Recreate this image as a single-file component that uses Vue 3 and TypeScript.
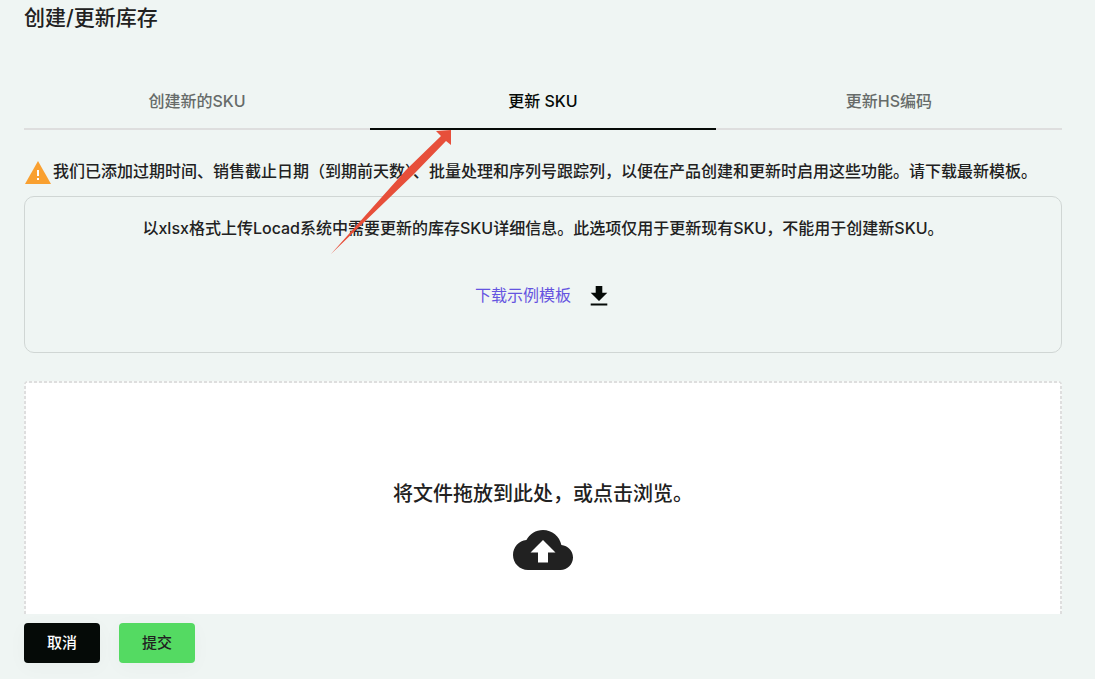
<script setup lang="ts">
import { ref } from 'vue'

interface Tab {
  id: string
  label: string
}

const tabs: Tab[] = [
  { id: 'create', label: '创建新的SKU' },
  { id: 'update', label: '更新 SKU' },
  { id: 'hs', label: '更新HS编码' },
]
const active = ref('update')
</script>

<template>
  <div class="page">
    <main class="content">
      <h1 class="title">创建/更新库存</h1>

      <div class="tabs" role="tablist">
        <button
          v-for="tab in tabs"
          :key="tab.id"
          type="button"
          role="tab"
          class="tab"
          :class="{ active: tab.id === active }"
          :aria-selected="tab.id === active"
          @click="active = tab.id"
        >
          {{ tab.label }}
        </button>
      </div>

      <p class="notice">
        <svg class="warning" viewBox="0 0 26 23" aria-hidden="true">
          <path d="M0 23L13 0L26 23z" fill="#f9a030" />
          <path d="M12 9h2v6h-2zM12 17h2v2h-2z" fill="#fff" />
        </svg>
        <span>我们已添加过期时间、销售截止日期（到期前天数）、批量处理和序列号跟踪列，以便在产品创建和更新时启用这些功能。请下载最新模板。</span>
      </p>

      <section class="card">
        <p class="hint">以xlsx格式上传Locad系统中需要更新的库存SKU详细信息。此选项仅用于更新现有SKU，不能用于创建新SKU。</p>
        <a class="download" href="#template">
          <span>下载示例模板</span>
          <svg class="download-icon" viewBox="0 0 24 24" aria-hidden="true">
            <path d="M20.3 9.7h-5V3H8.7v6.7h-5L12 18zM3.7 20.4v2.2h16.6v-2.2z" fill="#050a07" />
          </svg>
        </a>
      </section>

      <label class="dropzone">
        <span>将文件拖放到此处，或点击浏览。</span>
        <svg class="cloud" viewBox="0 4 24 16" aria-hidden="true">
          <path
            d="M19.35 10.04C18.67 6.59 15.64 4 12 4 9.11 4 6.6 5.64 5.35 8.04 2.34 8.36 0 10.91 0 14c0 3.31 2.69 6 6 6h13c2.76 0 5-2.24 5-5 0-2.64-2.05-4.78-4.65-4.96zM14 13v4h-4v-4H7l5-5 5 5h-3z"
            fill="#212121"
          />
        </svg>
        <input class="file" type="file" accept=".xlsx" />
      </label>

      <svg class="pointer" viewBox="0 0 120 124" aria-hidden="true">
        <path d="M0 124L75 40L110 6L105 1L120 0V15L115 11L82 45z" fill="#e74f3a" />
      </svg>
    </main>

    <footer class="actions">
      <button type="button" class="btn cancel">取消</button>
      <button type="button" class="btn submit">提交</button>
    </footer>
  </div>
</template>

<style>
body {
  margin: 0;
  background: #eff5f3;
}
</style>

<style scoped>
.page {
  display: flex;
  flex-direction: column;
  height: 100vh;
  box-sizing: border-box;
  padding: 0 33px 16px 24px;
  font-family: Inter, "Noto Sans CJK SC", sans-serif;
  font-size: 16px;
  line-height: 24px;
  font-weight: 500;
  color: #212121;
}
.content {
  position: relative;
  flex: 1;
  min-height: 0;
  overflow: hidden;
  display: flex;
  flex-direction: column;
}
.title {
  margin: 2px 0 44px;
  font-size: 21px;
  line-height: 32px;
  font-weight: 500;
}
.tabs {
  display: grid;
  grid-template-columns: repeat(3, 1fr);
  flex: none;
}
.tab {
  border: 0;
  border-bottom: 2px solid #dedede;
  background: none;
  height: 52px;
  padding: 0 0 4px;
  font: inherit;
  color: #666b69;
  cursor: pointer;
}
.tab.active {
  color: #050a07;
  border-color: #050a07;
}
.notice {
  display: flex;
  align-items: flex-start;
  gap: 2px;
  margin: 29px 0 0 1px;
  white-space: nowrap;
}
.warning {
  width: 26px;
  height: 23px;
  margin-top: 2px;
  flex: none;
}
.card {
  display: flex;
  flex-direction: column;
  align-items: center;
  flex: none;
  gap: 43px;
  box-sizing: border-box;
  margin-top: 12px;
  padding: 19px 20px 45px;
  border: 1px solid #d0d6d4;
  border-radius: 10px;
}
.hint {
  margin: 0;
}
.download {
  display: flex;
  align-items: center;
  gap: 16px;
  color: #6554e0;
  font-weight: 400;
  text-decoration: none;
}
.download-icon {
  width: 24px;
  height: 24px;
}
.dropzone {
  --dash: #dedede 0 3px, #f8faf9 3px 5px;
  display: flex;
  flex-direction: column;
  align-items: center;
  flex: none;
  gap: 20px;
  box-sizing: border-box;
  min-height: 270px;
  margin-top: 28px;
  padding-top: 97px;
  border-radius: 4px;
  background:
    repeating-linear-gradient(90deg, var(--dash)) top / 100% 2px no-repeat,
    repeating-linear-gradient(180deg, var(--dash)) left / 2px 100% no-repeat,
    repeating-linear-gradient(180deg, var(--dash)) right / 2px 100% no-repeat,
    #fff;
  font-size: 20px;
  line-height: 32px;
  cursor: pointer;
}
.cloud {
  width: 60px;
  height: 40px;
}
.file {
  position: absolute;
  width: 1px;
  height: 1px;
  opacity: 0;
}
.pointer {
  position: absolute;
  left: 307px;
  top: 130px;
  width: 120px;
  height: 124px;
  pointer-events: none;
}
.actions {
  display: flex;
  gap: 19px;
  padding-top: 9px;
}
.btn {
  width: 76px;
  height: 40px;
  padding: 0;
  border: 0;
  border-radius: 4px;
  font: inherit;
  font-size: 15px;
  box-shadow: 0 4px 20px rgba(0, 0, 0, 0.03);
  cursor: pointer;
}
.cancel {
  background: #050a07;
  color: #fff;
}
.submit {
  background: #54da62;
  color: #212121;
}
</style>
